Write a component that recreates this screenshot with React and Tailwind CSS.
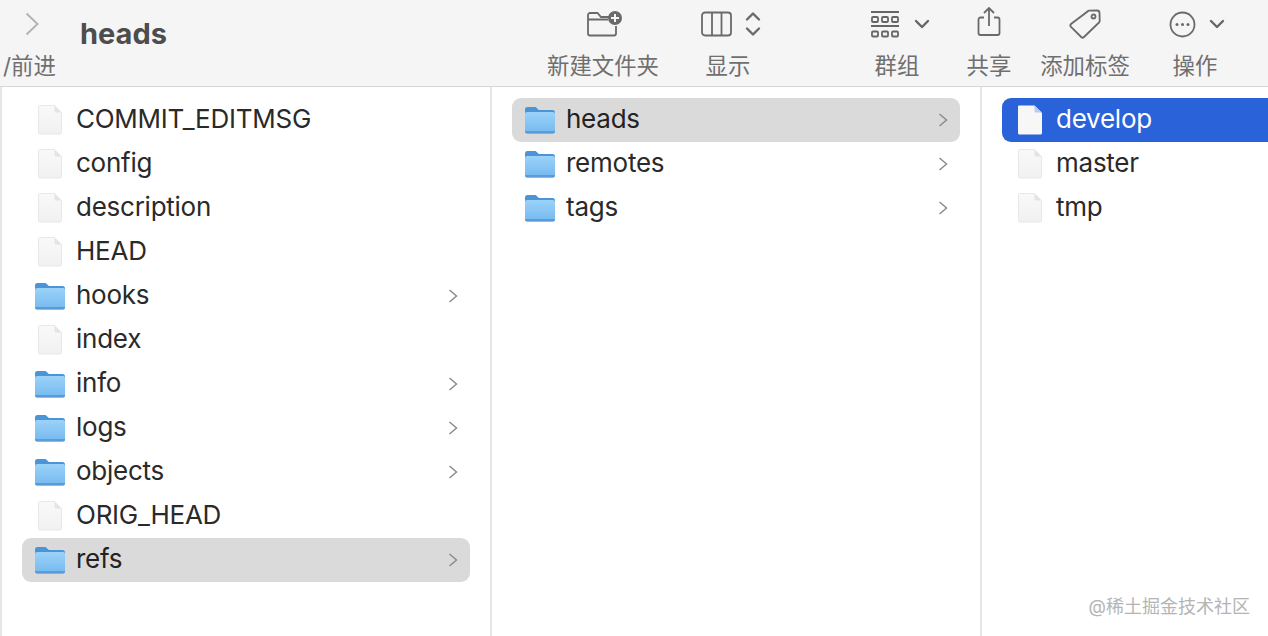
import React from 'react';

const sans = "font-['Inter','Noto_Sans_CJK_SC',sans-serif]";

const FileIcon = () => (
  <svg width="30" height="30" viewBox="0 0 30 30" className="shrink-0">
    <defs>
      <linearGradient id="paper" x1="0" y1="0" x2="0" y2="1">
        <stop offset="0" stopColor="#f9f9f9" />
        <stop offset="1" stopColor="#f1f1f1" />
      </linearGradient>
    </defs>
    <path d="M3.5 1.5a1 1 0 0 1 1-1h15l7 7v20a1.500 1.500 0 0 1-1.500 1.500h-20a1.500 1.500 0 0 1-1.500-1.500z" fill="url(#paper)" stroke="#e2e2e2" strokeWidth="0.8" />
    <path d="M19.500 .5v6a1 1 0 0 0 1 1h6z" fill="#e4e4e4" />
  </svg>
);

const WhiteFileIcon = () => (
  <svg width="30" height="30" viewBox="0 0 30 30" className="shrink-0">
    <path d="M3 1.500a1 1 0 0 1 1-1h15.500l7.500 7.500v20a1.500 1.500 0 0 1-1.500 1.500h-21a1.500 1.500 0 0 1-1.500-1.500z" fill="#f7f7f7" />
    <path d="M19.500 .5v6a1 1 0 0 0 1 1h6.500z" fill="#b9cbf0" />
  </svg>
);

const FolderIcon = () => (
  <svg width="30" height="28" viewBox="0 0 30 28" className="shrink-0">
    <defs>
      <linearGradient id="folderBody" x1="0" y1="0" x2="0" y2="1">
        <stop offset="0" stopColor="#9bd2f8" />
        <stop offset="1" stopColor="#74b9f0" />
      </linearGradient>
    </defs>
    <path d="M0 3.500a2.500 2.500 0 0 1 2.500-2.500h7c1.500 0 2 .6 3 1.700 .7.800 1.300 1.300 2.500 1.300h12.500a2.500 2.500 0 0 1 2.500 2.500v5h-30z" fill="#4b95d6" />
    <path d="M0 8a2 2 0 0 1 2-2h26a2 2 0 0 1 2 2v17.500a2 2 0 0 1-2 2h-26a2 2 0 0 1-2-2z" fill="url(#folderBody)" />
    <path d="M0 25h30v.5a2 2 0 0 1-2 2h-26a2 2 0 0 1-2-2z" fill="#5a9bd8" />
  </svg>
);

const Chevron = () => (
  <svg width="10" height="14" viewBox="0 0 10 14" fill="none" stroke="#8c8c8c" strokeWidth="1.500" className="shrink-0">
    <path d="M1.500 1l7 6-7 6" />
  </svg>
);

const Row = ({ name, kind, state }) => (
  <div
    className={
      'flex h-[44px] items-center pl-[13px] pr-[12px] ' +
      (state === 'open' ? 'rounded-[9px] bg-[#dadada] text-[#222222] ' : '') +
      (state === 'active' ? 'rounded-l-[9px] bg-[#2a62d9] text-white ' : '') +
      (!state ? 'text-[#2a2a2a] ' : '')
    }
  >
    {kind === 'folder' ? <FolderIcon /> : state === 'active' ? <WhiteFileIcon /> : <FileIcon />}
    <span className="ml-[11px] flex-1 pb-[2px] text-[26px] leading-[42px] tracking-[-0.25px]">{name}</span>
    {kind === 'folder' && <Chevron />}
  </div>
);

const ToolItem = ({ label, className, children }) => (
  <div className={'flex flex-col items-center ' + className}>
    <div className="flex h-[48px] items-center justify-center">{children}</div>
    <span className="mt-[5px] text-[22.400px] leading-[26px] text-[#6f6f6f]">{label}</span>
  </div>
);

const Down = () => (
  <svg width="16" height="10" viewBox="0 0 16 10" fill="none" stroke="#666666" strokeWidth="2.400" strokeLinecap="round" strokeLinejoin="round">
    <path d="M2 2l6 6 6-6" />
  </svg>
);

const col1 = [
  ['COMMIT_EDITMSG', 'file'],
  ['config', 'file'],
  ['description', 'file'],
  ['HEAD', 'file'],
  ['hooks', 'folder'],
  ['index', 'file'],
  ['info', 'folder'],
  ['logs', 'folder'],
  ['objects', 'folder'],
  ['ORIG_HEAD', 'file'],
  ['refs', 'folder', 'open'],
];
const col2 = [
  ['heads', 'folder', 'open'],
  ['remotes', 'folder'],
  ['tags', 'folder'],
];
const col3 = [
  ['develop', 'file', 'active'],
  ['master', 'file'],
  ['tmp', 'file'],
];

export default function App() {
  return (
    <div className={'relative flex h-[636px] w-[1268px] flex-col overflow-hidden bg-white ' + sans}>
      {/* toolbar */}
      <div className="flex h-[87px] shrink-0 items-start border-b border-[#d6d6d6] bg-[#f5f5f5]">
        <div className="ml-[3px] flex w-[54px] flex-col">
          <svg width="14" height="24" viewBox="0 0 14 24" fill="none" stroke="#b4b4b4" strokeWidth="2" className="ml-[22px] mt-[12px]">
            <path d="M1.500 1.500l11 10.500-11 10.500" />
          </svg>
          <span className="mt-[17px] whitespace-nowrap text-[22.400px] leading-[26px] text-[#6f6f6f]">/前进</span>
        </div>
        <span className="ml-[23px] mt-[15px] w-[90px] text-[29px] font-bold leading-[38px] text-[#4d4d4d]">heads</span>

        {/* new folder */}
        <ToolItem label="新建文件夹" className="ml-[377px] w-[112px]">
          <svg width="36" height="26" viewBox="0 0 36 26" fill="none" stroke="#6a6a6a" strokeWidth="1.800" className="ml-[4px]">
            <path d="M1 6V4a2 2 0 0 1 2-2h7.500l3.500 4h9M1 6v16.500a2 2 0 0 0 2 2h24a2 2 0 0 0 2-2V15M1 8.500h20" />
            <circle cx="28" cy="7" r="7" fill="#6a6a6a" stroke="none" />
            <path d="M28 3v8M24 7h8" stroke="#f5f5f5" strokeWidth="2" />
          </svg>
        </ToolItem>

        {/* columns view */}
        <ToolItem label="显示" className="ml-[33px] w-[72px]">
          <svg width="60" height="26" viewBox="0 0 60 26" fill="none" stroke="#6a6a6a" strokeWidth="1.800" className="ml-[5px]">
            <rect x="1" y="1.500" width="29" height="23" rx="3" />
            <path d="M11 1.500v23M20.500 1.500v23" />
            <path d="M46 8.500l6-6 6 6M46 17.500l6 6 6-6" strokeWidth="2.400" strokeLinecap="round" strokeLinejoin="round" />
          </svg>
        </ToolItem>

        {/* group */}
        <ToolItem label="群组" className="ml-[88px] w-[90px]">
          <div className="flex items-center gap-[15px] pl-[6px]">
            <svg width="28" height="27" viewBox="0 0 28 27" fill="none" stroke="#666666" strokeWidth="1.800">
              <path d="M0 1h28M0 15h28" />
              <rect x="1" y="6" width="6" height="5" rx="1" />
              <rect x="11" y="6" width="6" height="5" rx="1" />
              <rect x="21" y="6" width="6" height="5" rx="1" />
              <rect x="1" y="20.500" width="6" height="5" rx="1" />
              <rect x="11" y="20.500" width="6" height="5" rx="1" />
              <rect x="21" y="20.500" width="6" height="5" rx="1" />
            </svg>
            <Down />
          </div>
        </ToolItem>

        {/* share */}
        <ToolItem label="共享" className="ml-[17px] w-[60px]">
          <svg width="24" height="30" viewBox="0 0 24 30" fill="none" stroke="#6a6a6a" strokeWidth="1.800" className="-mt-[4px]">
            <path d="M7 10.500H3.500a2 2 0 0 0-2 2V26a2 2 0 0 0 2 2h17a2 2 0 0 0 2-2V12.500a2 2 0 0 0-2-2H17" />
            <path d="M12 19V1.500M7 6l5-5 5 5" />
          </svg>
        </ToolItem>

        {/* tag */}
        <ToolItem label="添加标签" className="ml-[18px] w-[96px]">
          <svg width="32" height="30" viewBox="0 0 32 30" fill="none" stroke="#6a6a6a" strokeWidth="1.800" className="-mt-[1px]">
            <path d="M18.500 2.500a2 2 0 0 1 1.500-.8l8 -.2a2.500 2.500 0 0 1 2.500 2.500l.2 8a2 2 0 0 1-.7 1.500L15 28a2 2 0 0 1-2.800 0L2 17.800a2 2 0 0 1 0-2.800z" />
            <circle cx="24.500" cy="7.500" r="2" />
          </svg>
        </ToolItem>

        {/* actions */}
        <ToolItem label="操作" className="ml-[17px] w-[90px]">
          <div className="flex items-center gap-[13px] pl-[3px]">
            <svg width="27" height="27" viewBox="0 0 27 27" fill="none" stroke="#6a6a6a" strokeWidth="1.800">
              <circle cx="13.500" cy="13.500" r="12" />
              <circle cx="8" cy="13.500" r="1.500" fill="#6a6a6a" stroke="none" />
              <circle cx="13.500" cy="13.500" r="1.500" fill="#6a6a6a" stroke="none" />
              <circle cx="19" cy="13.500" r="1.500" fill="#6a6a6a" stroke="none" />
            </svg>
            <Down />
          </div>
        </ToolItem>
      </div>

      {/* columns */}
      <div className="flex flex-1">
        <div className="w-[492px] shrink-0 border-x-2 border-[#e6e6e6] px-[20px] pt-[11px]">
          {col1.map(([name, kind, state]) => (
            <Row key={name} name={name} kind={kind} state={state} />
          ))}
        </div>
        <div className="w-[490px] shrink-0 border-r-2 border-[#e6e6e6] px-[20px] pt-[11px]">
          {col2.map(([name, kind, state]) => (
            <Row key={name} name={name} kind={kind} state={state} />
          ))}
        </div>
        <div className="flex-1 pl-[20px] pt-[11px]">
          {col3.map(([name, kind, state]) => (
            <Row key={name} name={name} kind={kind} state={state} />
          ))}
        </div>
      </div>

      {/* watermark */}
      <span className="absolute bottom-[17px] right-[18px] whitespace-nowrap text-[18px] leading-[24px] text-[#b4b4b4]">@稀土掘金技术社区</span>
    </div>
  );
}
